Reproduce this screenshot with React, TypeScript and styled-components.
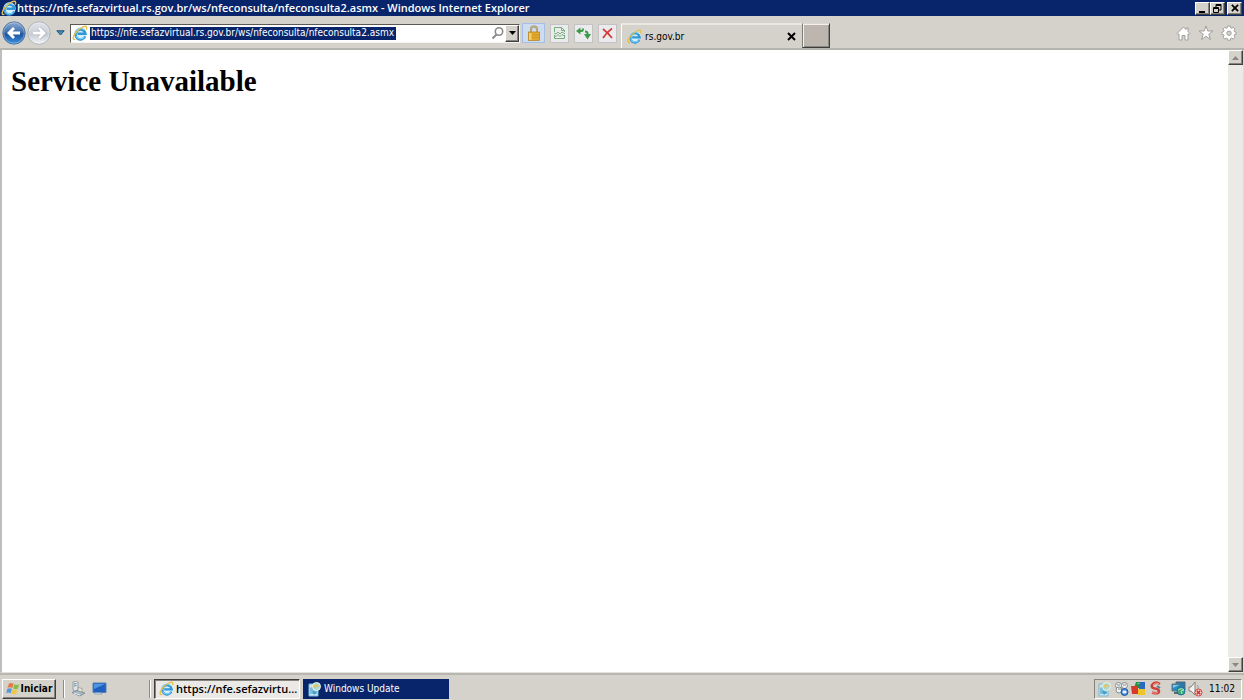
import React from "react";
import styled, { createGlobalStyle, css } from "styled-components";

const NAVY = "#08246b";
const FACE = "#d5d2cb";

const GlobalStyle = createGlobalStyle`
  * { box-sizing: border-box; }
  body {
    margin: 0;
    background: ${FACE};
    color: #000;
    font: 10px/14px "DejaVu Sans Condensed", "DejaVu Sans", sans-serif;
    overflow: hidden;
  }
  button, input { font: inherit; color: inherit; }
  button { padding: 0; border: 0; background: none; display: flex; align-items: center; justify-content: center; }
  svg { display: block; flex: none; }
`;

const raised = css`
  border: 1px solid;
  border-color: #fff #404040 #404040 #fff;
  box-shadow: inset -1px -1px 0 #87847e;
  background: ${FACE};
`;

const Screen = styled.div`
  display: flex;
  flex-direction: column;
  min-height: 100vh;
`;

const TitleBar = styled.header`
  display: flex;
  align-items: center;
  height: 16px;
  padding: 0 2px 0 1px;
  background: ${NAVY};
  color: #fff;
`;

const Title = styled.span`
  flex: 1;
  min-width: 0;
  overflow: hidden;
  white-space: nowrap;
  font: 600 11px/16px "Open Sans", "Noto Sans", sans-serif;
`;

const WindowButtons = styled.div`
  display: flex;
`;

const WindowButton = styled.button<{ $apart?: boolean }>`
  && {
    ${raised}
    width: 15px;
    height: 13px;
    margin-left: ${(p) => (p.$apart ? 2 : 0)}px;
  }
`;

const Toolbar = styled.div`
  display: flex;
  align-items: center;
  height: 34px;
  padding: 2px 7px 0 2px;
  border-bottom: 2px solid #b5b3af;
`;

const Navigation = styled.nav`
  display: flex;
  align-items: center;
  gap: 1px;
  width: 68px;
`;

const RecentPages = styled.button`
  && {
    margin-left: 4px;
  }
`;

const Address = styled.form`
  display: flex;
  align-items: center;
  flex: 0 1 450px;
  height: 19px;
  padding-left: 1px;
  border: 1px solid;
  border-color: #5c5955 #f5f4f1 #f5f4f1 #5c5955;
  background: #fff;
`;

const AddressInput = styled.input`
  width: 306px;
  min-width: 0;
  height: 13px;
  margin-left: 2px;
  padding: 0 0 0 1px;
  border: 0;
  outline: 0;
  background: ${NAVY};
  color: #fff;
`;

const Spacer = styled.div`
  flex: 1;
`;

const DropButton = styled.button`
  && {
    ${raised}
    width: 14px;
    height: 17px;
    margin-left: 1px;
  }
`;

const ToolButtons = styled.div`
  display: flex;
  align-items: center;
  gap: 5px;
  margin: 0 4px 0 2px;
`;

const ToolButton = styled.button<{ $active?: boolean }>`
  && {
    width: ${(p) => (p.$active ? 23 : 19)}px;
    height: ${(p) => (p.$active ? 20 : 19)}px;
    border: 1px solid ${(p) => (p.$active ? "#a3bfe6" : "#c3c2c5")};
    background: ${(p) => (p.$active ? "#cddcf0" : "#ebeaec")};
  }
`;

const Tab = styled.div`
  display: flex;
  align-self: flex-end;
  align-items: center;
  flex: 0 1 181px;
  height: 25px;
  padding: 0 6px 0 5px;
  gap: 3px;
  border-top: 2px solid #e9e7e2;
  border-left: 1px solid #fff;
`;

const TabTitle = styled.span`
  flex: 1;
`;

const NewTab = styled.button`
  && {
    align-self: flex-end;
    width: 28px;
    height: 25px;
    border: 1px solid;
    border-color: #dad7d2 #403e3b #403e3b #807d78;
    box-shadow: inset 1px 1px 0 #f3f1ed, inset -1px -1px 0 #8b8782;
    background: #bdb6af;
  }
`;

const Commands = styled.div`
  display: flex;
  align-items: center;
  gap: 7px;
  margin-left: auto;
`;

const Viewport = styled.div`
  display: flex;
  flex: 1;
  border-left: 2px solid #c0beba;
  border-right: 1px solid #dedcd7;
  border-bottom: 1px solid #e4e2dd;
  background: #fff;
`;

const Page = styled.main`
  flex: 1;
  padding: 14px 9px;
`;

const Heading = styled.h1`
  margin: 0;
  font: bold 29px/34px "Liberation Serif", serif;
`;

const Scrollbar = styled.div`
  display: flex;
  flex-direction: column;
  justify-content: space-between;
  width: 15px;
  background: #eceae6;
`;

const ScrollButton = styled.button`
  && {
    ${raised}
    width: 15px;
    height: 15px;
  }
`;

const Taskbar = styled.footer`
  display: flex;
  align-items: center;
  height: 27px;
  padding: 2px 2px 0;
  border-top: 2px solid #b8b6b1;
`;

const StartButton = styled.button`
  && {
    ${raised}
    width: 54px;
    height: 20px;
    font-weight: bold;
  }
`;

const Divider = styled.i`
  width: 2px;
  height: 18px;
  border-left: 1px solid #8f8c86;
  border-right: 1px solid #fff;
`;

const QuickLaunch = styled.div`
  display: flex;
  align-items: center;
  gap: 6px;
  width: 93px;
  padding-left: 7px;
`;

const Task = styled.button<{ $pressed?: boolean }>`
  && {
    flex: 0 1 146px;
    min-width: 0;
    height: 20px;
    justify-content: flex-start;
    gap: 2px;
    padding-left: 4px;
    margin-left: 3px;
    white-space: nowrap;
    overflow: hidden;
    ${(p) =>
      p.$pressed
        ? css`
            border: 1px solid;
            border-color: #403e3b #fff #fff #403e3b;
            box-shadow: inset 1px 1px 0 #87847e;
            background: #ebe9e6;
            font: 600 11px/14px "Open Sans", "Noto Sans", sans-serif;
          `
        : css`
            background: ${NAVY};
            color: #fff;
          `}
  }
`;

const Tray = styled.div`
  display: flex;
  align-items: center;
  gap: 2px;
  width: 148px;
  height: 20px;
  margin-left: auto;
  padding: 0 6px 0 2px;
  border: 1px solid;
  border-color: #87847e #fff #fff #87847e;
`;

const Clock = styled.time`
  margin-left: 4px;
`;

const IeIcon = ({ size = 16 }: { size?: number }) => (
  <svg width={size} height={size} viewBox="0 0 16 16" fill="none">
    <circle cx="8.5" cy="8.5" r="6.2" fill="#d3f0fc" />
    <path d="M13.2 11.4A5 5 0 1 1 13.5 8.8H5.5" stroke="#3297d6" strokeWidth="2.4" />
    <path d="M12.4 12.1A5 5 0 0 1 4 11M3.7 7A5 5 0 0 1 12.2 5" stroke="#79cdf4" strokeWidth="1.1" />
    <path d="M3.4 14.2C.4 15.5.3 11.9 3.7 7.7 8 2.6 14-.3 14.6 2.2c.2.8 0 1.6-.4 2.4" stroke="#e6c04f" strokeWidth="1.4" />
  </svg>
);

const NavArrow = ({ forward }: { forward?: boolean }) => {
  const id = forward ? "orb-forward" : "orb-back";
  const arrow = forward ? "M6 12h11M12 7l5 5-5 5" : "M18 12H7M12 7l-5 5 5 5";
  return (
    <svg width="24" height="24" viewBox="0 0 24 24">
      <defs>
        <linearGradient id={id} x2="0" y2="1">
          <stop stopColor={forward ? "#e3e5ea" : "#8fabd0"} />
          <stop offset=".45" stopColor={forward ? "#cdd1d8" : "#4272b2"} />
          <stop offset=".55" stopColor={forward ? "#c4c9d2" : "#1d559f"} />
          <stop offset="1" stopColor={forward ? "#f4f6fa" : "#3e92e0"} />
        </linearGradient>
      </defs>
      <circle cx="12" cy="12" r="11.2" fill={`url(#${id})`} stroke={forward ? "#a4a7ae" : "#4c6c9b"} strokeWidth=".8" />
      <circle cx="12" cy="12" r="10.2" fill="none" stroke="#fff" opacity=".3" />
      {forward && <path d={arrow} fill="none" stroke="#a6aab3" strokeWidth="4" />}
      <path d={arrow} fill="none" stroke="#fff" strokeWidth="2.8" />
    </svg>
  );
};

const Triangle = ({ up, color = "#000" }: { up?: boolean; color?: string }) => (
  <svg width="7" height="4" viewBox="0 0 7 4">
    <path d={up ? "M0 4h7L3.5 0z" : "M0 0h7L3.5 4z"} fill={color} />
  </svg>
);

const RecentIcon = () => (
  <svg width="9" height="6" viewBox="0 0 9 6">
    <path d="M.8.8h7.4L4.5 5z" fill="#3d94b5" stroke="#234f78" />
  </svg>
);

const SearchIcon = () => (
  <svg width="13" height="14" viewBox="0 0 13 14" fill="none" stroke="#8b8b8b">
    <circle cx="8" cy="5.5" r="3.7" strokeWidth="1.6" />
    <path d="M5.5 8.5l-4 4" strokeWidth="2" />
  </svg>
);

const LockIcon = () => (
  <svg width="14" height="16" viewBox="0 0 14 16">
    <path d="M4 8V4.5a3 3 0 0 1 6 0V8" fill="none" stroke="#a08a58" strokeWidth="2" />
    <path d="M4 7V4.5a3 3 0 0 1 6 0V7" fill="none" stroke="#e0d4ac" strokeWidth=".7" />
    <rect x="1.4" y="7" width="11.2" height="8.5" fill="#e2a92c" stroke="#b4801c" strokeWidth=".7" />
    <path d="M2 8h2.500v7H2z" fill="#f3cf6a" />
    <path d="M5 10h7M5 12.5h7" stroke="#cc9326" strokeWidth=".8" />
  </svg>
);

const BrokenPageIcon = () => (
  <svg width="13" height="14" viewBox="0 0 13 14" fill="none" stroke="#6aa872" strokeWidth=".9">
    <path d="M1.500 6V1.500h7l3 3V6M8.500 1.500v3h3M1.500 9v3.500h10V9" />
    <path d="M1 7l2 1 2-2 2 2 2-2 3 2M1 9.500l2 1 2-2 2 2 2-2 3 2" />
  </svg>
);

const RefreshIcon = () => (
  <svg width="15" height="14" viewBox="0 0 15 14" fill="none" stroke="#3d9b48">
    <path d="M0 5l4.500-3.500v7z" fill="#3d9b48" stroke="none" />
    <path d="M4 5h1.500Q7 5 7 2.500" strokeWidth="2" />
    <path d="M15 8l-3.500 5.500L8 8z" fill="#3d9b48" stroke="none" />
    <path d="M11.500 9V7.500q0-2-2.500-2" strokeWidth="2" />
  </svg>
);

const StopIcon = () => (
  <svg width="13" height="13" viewBox="0 0 13 13">
    <path d="M2 2q5 4 9 9M11 1.5Q5 6 2 11" fill="none" stroke="#d13c3c" strokeWidth="1.7" />
  </svg>
);

const CloseIcon = ({ size = 9 }: { size?: number }) => (
  <svg width={size} height={size} viewBox="0 0 9 9">
    <path d="M1 1l7 7M8 1L1 8" stroke="#000" strokeWidth="2" />
  </svg>
);

const MinimizeIcon = () => (
  <svg width="9" height="9" viewBox="0 0 9 9"><path d="M1 7h6v2H1z" /></svg>
);

const RestoreIcon = () => (
  <svg width="9" height="9" viewBox="0 0 9 9" fill="none" stroke="#000">
    <path d="M3 3V.5h5V6H6M3 1.500h5" />
    <path d="M.5 3.500h5v5h-5zM.5 4.500h5" />
  </svg>
);

const HomeIcon = () => (
  <svg width="15" height="15" viewBox="0 0 15 15">
    <path d="M1 7.5L7.500 1 10 3.500V2h2v3.500l2 2-1 1-1-.7V14H9V9.500H6V14H3V7.800l-1 .7z" fill="#fff" stroke="#a09f9e" />
  </svg>
);

const StarIcon = () => (
  <svg width="16" height="16" viewBox="0 0 16 16">
    <path d="M8 1l1.800 5H15l-4.200 3.200 1.600 5.300L8 11.300l-4.400 3.200 1.600-5.300L1 6h5.200z" fill="#fff" stroke="#a09f9e" />
  </svg>
);

const GearIcon = () => (
  <svg width="16" height="16" viewBox="0 0 16 16">
    <path
      d="M6.7 1h2.600l.4 1.900 1 .4 1.600-1 1.700 1.800-1 1.600.4 1 1.700.4v2.200l-1.700.4-.4 1 1 1.600-1.700 1.800-1.600-1-1 .4-.4 1.700H6.700l-.4-1.700-1-.4-1.600 1L2 12.300l1-1.600-.4-1L.9 9.300V7.100l1.700-.4.4-1-1-1.600 1.700-1.800 1.600 1 1-.4z"
      fill="#fff"
      stroke="#a09f9e"
    />
    <circle cx="8" cy="8.2" r="2.2" fill="#d5d2cb" stroke="#a09f9e" />
  </svg>
);

const WindowsFlag = () => (
  <svg width="15" height="14" viewBox="0 0 15 14">
    <path d="M3 1.5q2-1 4.500.3L6.300 6Q4 4.800 1.500 5.900z" fill="#e57843" />
    <path d="M8.300 2.200q2.500 1.300 5 .3l-1.500 4.300q-2.300 1-4.600-.4z" fill="#85bd4a" />
    <path d="M1.300 6.700q2.500-1 4.700.2l-1.300 4.300Q2.500 10 .2 10.900z" fill="#5798da" />
    <path d="M6.800 7.300q2.300 1.300 4.700.3L10.200 12q-2.400 1-4.700-.4z" fill="#efc646" />
  </svg>
);

const ServerIcon = () => (
  <svg width="15" height="16" viewBox="0 0 15 16">
    <path d="M2 1l3-1 2 1v8l-3 1-2-1z" fill="#dde4ea" stroke="#83909a" strokeWidth=".8" />
    <path d="M3 3l2.500-.5M3 5l2.500-.5" stroke="#708796" />
    <path d="M1 11.500l5-2 8 2.500-5 3z" fill="#a9b7c0" stroke="#748896" strokeWidth=".8" />
    <path d="M7 6.500l4 1v3.500l-4-1z" fill="#e9e7da" stroke="#8b9090" strokeWidth=".7" />
    <path d="M3 12l6 2" stroke="#e5edf1" />
  </svg>
);

const DesktopIcon = () => (
  <svg width="15" height="13" viewBox="0 0 15 13">
    <path d="M1 1h13v9.500H1z" fill="#1f5fc0" stroke="#5580b5" />
    <path d="M2 2h11L2 7z" fill="#4d94e3" />
    <path d="M2 10.500h7l1 1.500H3z" fill="#dbe7ee" stroke="#587faa" strokeWidth=".6" />
  </svg>
);

const UpdateIcon = () => (
  <svg width="15" height="16" viewBox="0 0 15 16">
    <path d="M2 3h9v12H2z" fill="#c9e8f4" stroke="#78b8d0" />
    <path d="M3 13V7l4-2 3 2v6z" fill="#79bfdd" />
    <circle cx="9.5" cy="5.5" r="4" fill="#a9d9df" stroke="#f1f4da" />
    <path d="M6 5q4-4 7 1l-3-1-2 3z" fill="#e0c766" />
    <path d="M5 10l5 1-3 3z" fill="#4499ce" />
  </svg>
);

const ClusterIcon = () => (
  <svg width="15" height="16" viewBox="0 0 15 16" fill="#f1f1ee" stroke="#858c92">
    <circle cx="4.5" cy="4.5" r="3" />
    <circle cx="10.5" cy="4.5" r="3" />
    <circle cx="5" cy="9" r="3" />
    <path d="M3 4h3M9 4h3M4 8h3" />
    <circle cx="10.5" cy="11" r="3.5" fill="#4186d4" stroke="#265d9f" />
    <path d="M9 10h3v2H9z" fill="#fff" stroke="#d4e7fa" />
  </svg>
);

const BlocksIcon = () => (
  <svg width="15" height="15" viewBox="0 0 15 15">
    <path d="M5 1h5v6H3z" fill="#249142" />
    <path d="M9 1h5v7H8z" fill="#2b69c0" />
    <path d="M0 5h7v8H1z" fill="#d8392d" />
    <path d="M7 8h7v6H7z" fill="#efc629" />
    <path d="M6 3l3-1" stroke="#77c784" />
  </svg>
);

const CleanerIcon = () => (
  <svg width="15" height="15" viewBox="0 0 15 15" fill="none">
    <path d="M12 3Q7 0 4 4q-1 3 3 3.500 4 .5 4 3-1 3-7 1" stroke="#cf4238" strokeWidth="2.6" />
    <path d="M11 2.5Q7 1 5 4M4 11.500q3 1.500 6 0" stroke="#ef9a8c" />
    <path d="M9 5l3 2" stroke="#587aa2" strokeWidth="2" />
  </svg>
);

const NetworkIcon = () => (
  <svg width="15" height="15" viewBox="0 0 15 15">
    <path d="M5 1h9v8H5z" fill="#237bae" stroke="#566775" />
    <path d="M1 3h8v7H1z" fill="#288cc0" stroke="#617481" />
    <path d="M2 4h6L2 7z" fill="#7ec8e4" />
    <path d="M3 12h5" stroke="#596a75" strokeWidth="2" />
    <circle cx="10" cy="10" r="4" fill="#3caa75" stroke="#1c6fa1" />
    <path d="M7 9q4-3 6 0l-3 1 1 3" fill="none" stroke="#a8e1d1" />
  </svg>
);

const MutedIcon = () => (
  <svg width="15" height="16" viewBox="0 0 15 16">
    <path d="M1 6h2l4-5v13l-4-4H1z" fill="#f2f2ef" stroke="#83817d" />
    <path d="M9 4q2 2 1 4" fill="none" stroke="#9b9995" />
    <circle cx="10.5" cy="11.5" r="3.5" fill="#f3d5d2" stroke="#d9433d" />
    <path d="M8.800 9.800l3.400 3.400M12.200 9.800l-3.400 3.400" stroke="#cc2f2b" strokeWidth="1.5" />
  </svg>
);

const PAGE_URL = "https://nfe.sefazvirtual.rs.gov.br/ws/nfeconsulta/nfeconsulta2.asmx";

export default function App() {
  return (
    <Screen>
      <GlobalStyle />
      <TitleBar>
        <IeIcon />
        <Title>{PAGE_URL} - Windows Internet Explorer</Title>
        <WindowButtons>
          <WindowButton aria-label="Minimize"><MinimizeIcon /></WindowButton>
          <WindowButton aria-label="Restore"><RestoreIcon /></WindowButton>
          <WindowButton aria-label="Close" $apart><CloseIcon size={8} /></WindowButton>
        </WindowButtons>
      </TitleBar>
      <Toolbar>
        <Navigation aria-label="History">
          <button aria-label="Back"><NavArrow /></button>
          <button aria-label="Forward"><NavArrow forward /></button>
          <RecentPages aria-label="Recent pages"><RecentIcon /></RecentPages>
        </Navigation>
        <Address>
          <IeIcon />
          <AddressInput aria-label="Address" defaultValue={PAGE_URL} spellCheck={false} />
          <Spacer />
          <button type="button" aria-label="Search"><SearchIcon /></button>
          <DropButton type="button" aria-label="Show addresses"><Triangle /></DropButton>
        </Address>
        <ToolButtons>
          <ToolButton aria-label="Security report" $active><LockIcon /></ToolButton>
          <ToolButton aria-label="Compatibility view"><BrokenPageIcon /></ToolButton>
          <ToolButton aria-label="Refresh"><RefreshIcon /></ToolButton>
          <ToolButton aria-label="Stop"><StopIcon /></ToolButton>
        </ToolButtons>
        <Tab>
          <IeIcon size={15} />
          <TabTitle>rs.gov.br</TabTitle>
          <button aria-label="Close tab"><CloseIcon /></button>
        </Tab>
        <NewTab aria-label="New tab" />
        <Commands>
          <button aria-label="Home"><HomeIcon /></button>
          <button aria-label="Favorites"><StarIcon /></button>
          <button aria-label="Tools"><GearIcon /></button>
        </Commands>
      </Toolbar>
      <Viewport>
        <Page>
          <Heading>Service Unavailable</Heading>
        </Page>
        <Scrollbar>
          <ScrollButton aria-label="Scroll up"><Triangle up color="#8b8883" /></ScrollButton>
          <ScrollButton aria-label="Scroll down"><Triangle color="#8b8883" /></ScrollButton>
        </Scrollbar>
      </Viewport>
      <Taskbar>
        <StartButton><WindowsFlag />Iniciar</StartButton>
        <QuickLaunch>
          <Divider />
          <ServerIcon />
          <DesktopIcon />
        </QuickLaunch>
        <Divider />
        <Task $pressed><IeIcon size={15} />https://nfe.sefazvirtu...</Task>
        <Task><UpdateIcon />Windows Update</Task>
        <Tray>
          <UpdateIcon />
          <ClusterIcon />
          <BlocksIcon />
          <CleanerIcon />
          <Spacer />
          <NetworkIcon />
          <MutedIcon />
          <Clock>11:02</Clock>
        </Tray>
      </Taskbar>
    </Screen>
  );
}
